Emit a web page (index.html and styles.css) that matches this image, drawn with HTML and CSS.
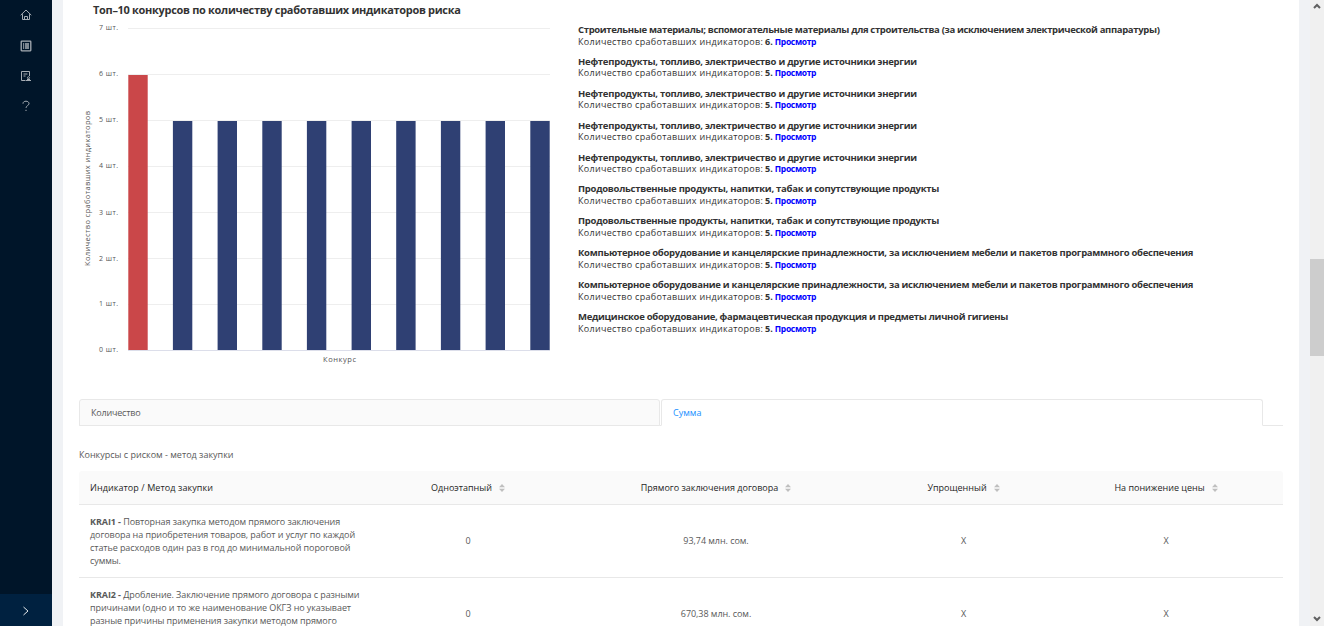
FILE: index.html
```html
<!DOCTYPE html>
<html lang="ru">
<head>
<meta charset="utf-8">
<title>Индикаторы риска</title>
<link rel="stylesheet" href="styles.css">
</head>
<body>
<div class="app">
  <aside class="sidebar">
    <nav class="menu">
      <svg class="icon" viewBox="0 0 12 12"><path d="M.7 6.200 6 1l5.300 5.200M2.500 5.200V10.500h7V5.200M4.500 10.500V7.500h3v3"/></svg>
      <svg class="icon list" viewBox="0 0 12 12"><rect x="1.200" y="1.200" width="9.600" height="9.600" rx=".5"/><path d="M3 4h1.200M5 4h4M3 6h1.200M5 6h4M3 8h1.200M5 8h4"/></svg>
      <svg class="icon" viewBox="0 0 12 12"><path d="M5.500 10.500h-4v-9h8V6M3.500 4h4M3.500 6h2M6 10.500h5M7 9.500h3"/><circle cx="8.500" cy="7.700" r="1"/></svg>
      <svg class="icon" viewBox="0 0 12 12"><path d="M3 3.700C3 2 4.200 1.200 6 1.200S9 2.200 9 3.700C9 5.500 6 5.700 6 7.900M6 9.800V11"/></svg>
    </nav>
    <div class="trigger"><svg class="chevron" viewBox="0 0 8 10"><path d="m1.500 1 4.500 4-4.500 4"/></svg></div>
  </aside>
  <main class="content">
    <section class="top">
      <div class="chart">
        <h2 class="chart-title">Топ–10 конкурсов по количеству сработавших индикаторов риска</h2>
        <svg class="plot" width="487" height="348" viewBox="63 20 487 348">
          <g class="grid"><path d="M128 28.500h422M128 74.500h422M128 120.500h422M128 166.500h422M128 212.500h422M128 258.500h422M128 304.500h422"/></g>
          <g class="bars">
            <rect class="hot" x="128.300" y="75" width="19.400" height="275.500"/>
            <rect x="172.900" y="121" width="19.400" height="229.500"/><rect x="217.600" y="121" width="19.400" height="229.500"/>
            <rect x="262.300" y="121" width="19.400" height="229.500"/><rect x="306.900" y="121" width="19.400" height="229.500"/>
            <rect x="351.600" y="121" width="19.400" height="229.500"/><rect x="396.200" y="121" width="19.400" height="229.500"/>
            <rect x="440.900" y="121" width="19.400" height="229.500"/><rect x="485.600" y="121" width="19.400" height="229.500"/>
            <rect x="530.300" y="121" width="19.400" height="229.500"/>
          </g>
          <path class="axis" d="M128 350.500h422"/>
          <g class="ticks">
            <text x="99" y="30" textLength="19">7 шт.</text><text x="99" y="76" textLength="19">6 шт.</text>
            <text x="99" y="122" textLength="19">5 шт.</text><text x="99" y="168" textLength="19">4 шт.</text>
            <text x="99" y="215" textLength="19">3 шт.</text><text x="99" y="261" textLength="19">2 шт.</text>
            <text x="99" y="306" textLength="19">1 шт.</text><text x="99" y="352" textLength="19">0 шт.</text>
          </g>
          <text class="axis-name" x="323" y="362" textLength="33">Конкурс</text>
          <text class="axis-name" transform="translate(90 266) rotate(-90)" textLength="155">Количество сработавших индикаторов</text>
        </svg>
      </div>
      <ul class="contests">
        <li><b class="c1">Строительные материалы; вспомогательные материалы для строительства (за исключением электрической аппаратуры)</b><p><span>Количество сработавших индикаторов:</span> <b>6.</b> <a>Просмотр</a></p></li>
        <li><b class="c2">Нефтепродукты, топливо, электричество и другие источники энергии</b><p><span>Количество сработавших индикаторов:</span> <b>5.</b> <a>Просмотр</a></p></li>
        <li><b class="c2">Нефтепродукты, топливо, электричество и другие источники энергии</b><p><span>Количество сработавших индикаторов:</span> <b>5.</b> <a>Просмотр</a></p></li>
        <li><b class="c2">Нефтепродукты, топливо, электричество и другие источники энергии</b><p><span>Количество сработавших индикаторов:</span> <b>5.</b> <a>Просмотр</a></p></li>
        <li><b class="c2">Нефтепродукты, топливо, электричество и другие источники энергии</b><p><span>Количество сработавших индикаторов:</span> <b>5.</b> <a>Просмотр</a></p></li>
        <li><b class="c3">Продовольственные продукты, напитки, табак и сопутствующие продукты</b><p><span>Количество сработавших индикаторов:</span> <b>5.</b> <a>Просмотр</a></p></li>
        <li><b class="c3">Продовольственные продукты, напитки, табак и сопутствующие продукты</b><p><span>Количество сработавших индикаторов:</span> <b>5.</b> <a>Просмотр</a></p></li>
        <li><b class="c4">Компьютерное оборудование и канцелярские принадлежности, за исключением мебели и пакетов программного обеспечения</b><p><span>Количество сработавших индикаторов:</span> <b>5.</b> <a>Просмотр</a></p></li>
        <li><b class="c4">Компьютерное оборудование и канцелярские принадлежности, за исключением мебели и пакетов программного обеспечения</b><p><span>Количество сработавших индикаторов:</span> <b>5.</b> <a>Просмотр</a></p></li>
        <li><b class="c5">Медицинское оборудование, фармацевтическая продукция и предметы личной гигиены</b><p><span>Количество сработавших индикаторов:</span> <b>5.</b> <a>Просмотр</a></p></li>
      </ul>
    </section>
    <div class="tabs"><div class="tab">Количество</div><div class="tab active">Сумма</div></div>
    <p class="caption">Конкурсы с риском - метод закупки</p>
    <div class="table">
      <div class="row head">
        <div>Индикатор / Метод закупки</div>
        <div>Одноэтапный<svg class="sort" viewBox="0 0 6 8"><path d="M0 3.300 3 0l3 3.300zM0 4.700 3 8l3-3.300z"/></svg></div>
        <div>Прямого заключения договора<svg class="sort" viewBox="0 0 6 8"><path d="M0 3.300 3 0l3 3.300zM0 4.700 3 8l3-3.300z"/></svg></div>
        <div>Упрощенный<svg class="sort" viewBox="0 0 6 8"><path d="M0 3.300 3 0l3 3.300zM0 4.700 3 8l3-3.300z"/></svg></div>
        <div>На понижение цены<svg class="sort" viewBox="0 0 6 8"><path d="M0 3.300 3 0l3 3.300zM0 4.700 3 8l3-3.300z"/></svg></div>
      </div>
      <div class="row">
        <div class="name"><b>KRAI1 -</b> Повторная закупка методом прямого заключения<br>договора на приобретения товаров, работ и услуг по каждой<br>статье расходов один раз в год до минимальной пороговой<br>суммы.</div>
        <div>0</div><div>93,74 млн. сом.</div><div>X</div><div>X</div>
      </div>
      <div class="row">
        <div class="name"><b>KRAI2 -</b> Дробление. Заключение прямого договора с разными<br>причинами (одно и то же наименование ОКГЗ но указывает<br>разные причины применения закупки методом прямого</div>
        <div>0</div><div>670,38 млн. сом.</div><div>X</div><div>X</div>
      </div>
    </div>
  </main>
  <div class="scrollbar">
    <svg class="arrow" viewBox="0 0 8 6"><path d="m1 5 3-3 3 3"/></svg>
    <div class="thumb"></div>
    <svg class="arrow" viewBox="0 0 8 6"><path d="m1 1 3 3 3-3"/></svg>
  </div>
</div>
</body>
</html>
```
FILE: styles.css
```css
* { box-sizing: border-box; }
body { margin: 0; overflow: hidden; font-family: "Open Sans", "Noto Sans", sans-serif; font-size: 9px; line-height: 13px; color: #595959; }
p, h2, ul { margin: 0; padding: 0; list-style: none; }
.app { display: flex; height: 626px; background: #f0f2f5; }
.sidebar { width: 52px; background: #001529; display: flex; flex-direction: column; justify-content: space-between; }
.menu { display: flex; flex-direction: column; align-items: center; padding: 9px 1px 0 0; gap: 18px; }
.icon { width: 12px; height: 12px; fill: none; stroke: #a6adb4; stroke-width: 1; }
.list { margin-top: 1px; stroke-width: 1.300; }
.trigger { height: 32px; background: #002140; display: flex; align-items: center; justify-content: center; padding-top: 1px; }
.chevron { width: 8px; height: 10px; fill: none; stroke: #e5e9ec; stroke-width: 1; }
.content { width: 1236px; margin: 0 11px; background: #fff; overflow: hidden; }
.top { display: flex; height: 399px; }
.chart { width: 515px; }
.chart-title { height: 20px; padding: 2px 0 0 30px; font-size: 11px; line-height: 15px; font-weight: 700; letter-spacing: -.31px; color: #333; white-space: nowrap; }
.plot { display: block; }
.grid path { stroke: #eee; }
.bars { fill: #2f4073; }
.bars .hot { fill: #ca4749; }
.axis { stroke: #dcdeea; }
.plot text { font-family: "Open Sans", sans-serif; font-size: 7px; fill: #555; }
.plot .axis-name { font-size: 7.500px; }
.contests { padding-top: 24px; color: #333; white-space: nowrap; }
.contests li { height: 31.900px; line-height: 11.500px; font-size: 9px; }
.contests li > b { display: block; font-size: 9.500px; }
.contests .c1 { letter-spacing: -.340px; }
.contests .c2 { letter-spacing: -.250px; }
.contests .c3 { letter-spacing: -.265px; }
.contests .c4 { letter-spacing: -.275px; }
.contests .c5 { letter-spacing: -.285px; }
.contests p { display: flex; gap: 2px; }
.contests span { letter-spacing: .3px; }
.contests a { color: #00f; font-weight: 700; font-size: 8.500px; letter-spacing: -.32px; }
.tabs { display: flex; gap: 1px; margin: 0 16px; height: 27px; padding-right: 20px; background: linear-gradient(#e8e8e8, #e8e8e8) bottom / 100% 1px no-repeat; }
.tab { width: 581px; padding: 6px 11px; border: 1px solid #e8e8e8; border-radius: 3px 3px 0 0; background: #fafafa; letter-spacing: -.2px; }
.tab.active { flex: 1; background: #fff; border-bottom-color: #fff; color: #1890ff; letter-spacing: 0; }
.caption { margin: 22px 16px 10px; }
.table { margin: 0 16px; }
.row { display: grid; grid-template-columns: 303px 172px 324px 171px 234px; align-items: center; height: 73px; border-bottom: 1px solid #e8e8e8; text-align: center; }
.row > div { padding-bottom: 2px; letter-spacing: -.05px; }
.row > div:first-child { text-align: left; padding: 0 0 0 11px; white-space: nowrap; }
.row > .name { min-height: 52px; letter-spacing: -.08px; }
.head { height: 34px; background: #fafafa; border-radius: 3px 3px 0 0; color: #262626; font-weight: 500; }
.head > div { padding-bottom: 0; letter-spacing: 0; }
.row.head > div:first-child { letter-spacing: .08px; }
.sort { width: 6px; height: 8px; margin-left: 7px; fill: #bfbfbf; vertical-align: -1px; }
.scrollbar { width: 14px; background: #f0f0f0; display: flex; flex-direction: column; align-items: center; padding: 3px 0 4px; }
.thumb { width: 14px; height: 97px; margin: 250px 0 auto; background: #cdcdcd; }
.arrow { width: 8px; height: 6px; fill: none; stroke: #606060; stroke-width: 2; }
```
